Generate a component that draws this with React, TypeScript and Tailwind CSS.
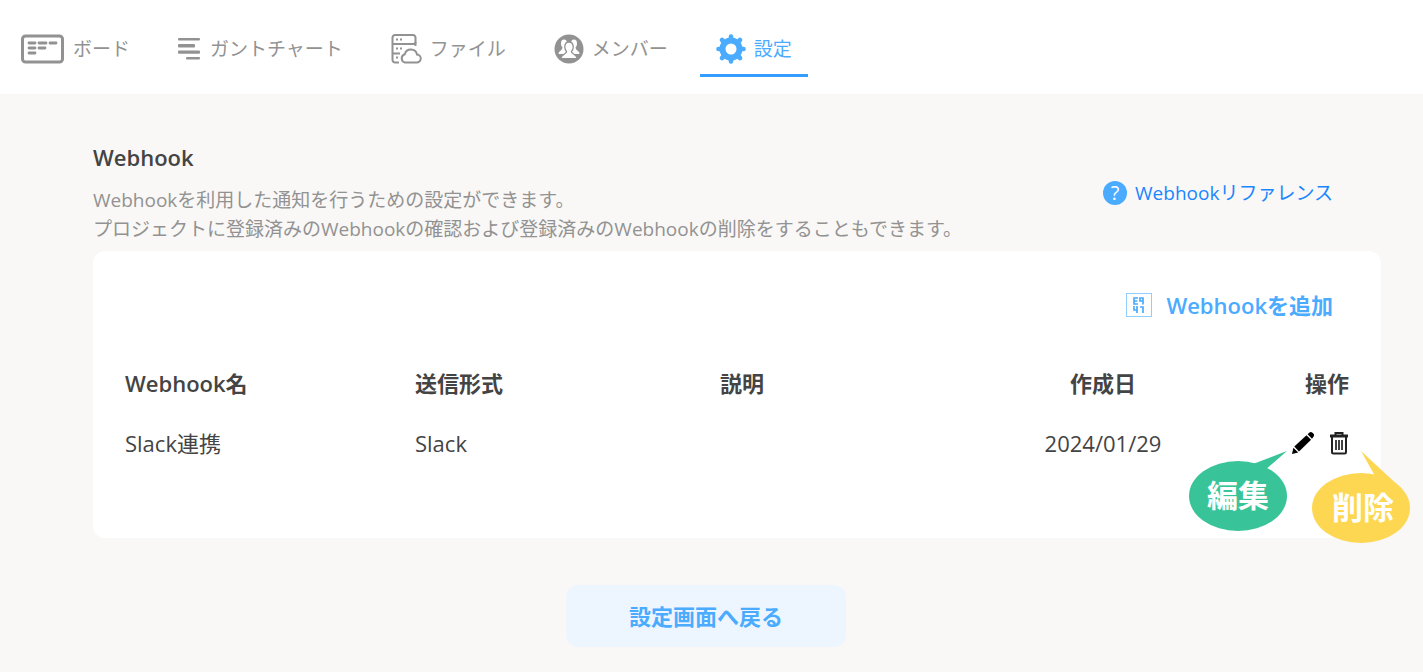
const navItems = [
  { label: "ボード", href: "#board", icon: <BoardIcon /> },
  { label: "ガントチャート", href: "#gantt", icon: <GanttIcon /> },
  { label: "ファイル", href: "#files", icon: <FileIcon /> },
  { label: "メンバー", href: "#members", icon: <MembersIcon /> },
]

const webhooks = [
  { id: 1, name: "Slack連携", format: "Slack", description: "", createdAt: "2024/01/29" },
]

function BoardIcon() {
  return (
    <svg width="45" height="30" viewBox="0 0 45 30" fill="none" stroke="#929292" aria-hidden="true">
      <rect x="2.5" y="2" width="40" height="26" rx="3" strokeWidth="3" />
      <path
        d="M9 9h6M19 9h7M30 9h6M9 14h6M19 14h6M9 19h6"
        strokeWidth="2.8"
        strokeLinecap="round"
      />
    </svg>
  )
}

function GanttIcon() {
  return (
    <svg width="24" height="24" viewBox="0 0 24 24" fill="#929292" aria-hidden="true">
      <rect x="0" y="1" width="22" height="2.6" rx="1" />
      <rect x="0" y="7" width="17" height="3.4" rx="1" />
      <rect x="0" y="13.4" width="22" height="3.4" rx="1" />
      <rect x="8" y="20" width="14" height="2.6" rx="1" />
    </svg>
  )
}

function FileIcon() {
  return (
    <svg width="31" height="30" viewBox="0 0 31 30" fill="none" stroke="#929292" strokeWidth="2" aria-hidden="true">
      <path d="M8 28.500H4a2.500 2.500 0 0 1-2.500-2.500V3.500A2.500 2.500 0 0 1 4 1h18a2.500 2.500 0 0 1 2.500 2.500V8a2 2 0 0 1-2 2H1.500" />
      <path d="M24.500 8v4M1.500 19.500H9" />
      <path d="M5 5.500h2M9 5.500h2M5 14.500h2M9 14.500h2M5 23.500h2" />
      <path d="M14 28.500h11.500a4 4 0 0 0 .5-8 6.300 6.300 0 0 0-12.200-.3A4.300 4.300 0 0 0 14 28.500z" />
    </svg>
  )
}

function MembersIcon() {
  return (
    <svg width="30" height="30" viewBox="0 0 30 30" aria-hidden="true">
      <circle cx="15" cy="15" r="14.500" fill="#929292" />
      <g fill="#fff">
        <ellipse cx="10" cy="9.500" rx="3" ry="4" />
        <ellipse cx="20" cy="9.500" rx="3" ry="4" />
        <path d="M4.500 20c0-3.500 4-3 4-7h4v7zM25.500 20c0-3.500-4-3-4-7h-4v7z" />
      </g>
      <path
        d="M15 8c-2.700 0-4.200 2-4.200 5 0 2 .8 3.600 1.800 4.600 0 2.700-5.400 2.200-5.800 7h16.400c-.4-4.800-5.800-4.300-5.800-7 1-1 1.800-2.600 1.800-4.600 0-3-1.500-5-4.200-5z"
        fill="#fff"
        stroke="#929292"
        strokeWidth="1.300"
      />
    </svg>
  )
}

function GearIcon() {
  return (
    <svg width="30" height="30" viewBox="0 0 30 30" fill="none" stroke="#4aabff" aria-hidden="true">
      <circle cx="15" cy="15" r="8.500" strokeWidth="6" />
      <path
        d="M15 2.500v3M15 24.500v3M2.500 15h3M24.500 15h3M6 6l2 2M22 22l2 2M24 6l-2 2M8 22l-2 2"
        strokeWidth="4.600"
        strokeLinecap="round"
      />
    </svg>
  )
}

function MissingGlyphIcon() {
  return (
    <svg width="26" height="24" viewBox="0 0 26 24" fill="none" stroke="#4aabff" aria-hidden="true">
      <rect x="0.500" y="0.500" width="25" height="23" strokeOpacity="0.600" />
      <path
        d="M12 5H8v6h4M8 8h3.500M17 11.500V5h-3v3h3M8 13v4h3.500M11 13v7M14 14h3v6"
        strokeWidth="1.700"
      />
    </svg>
  )
}

function PencilIcon() {
  return (
    <svg width="22" height="22" viewBox="0 0 22 22" fill="#000" aria-hidden="true">
      <path d="M0 22l1.400-6.200 4.800 4.800z" />
      <path d="M2.300 14.500L14.500 3.200l4.600 4.600L7 19.500z" />
      <path d="M15.600 2.200L17.200.8a2.400 2.400 0 0 1 3.300 0l.8.8a2.400 2.400 0 0 1 0 3.300l-1.300 1.800z" />
    </svg>
  )
}

function TrashIcon() {
  return (
    <svg width="20" height="24" viewBox="0 0 20 24" fill="none" stroke="#222" strokeWidth="2" aria-hidden="true">
      <path d="M1 5h18" strokeWidth="3" />
      <path d="M6.500 4.500V2h7v2.500M3 5.500v15.500a1.500 1.500 0 0 0 1.500 1.500h11a1.500 1.500 0 0 0 1.500-1.500V5.500" />
      <path d="M7 9v10M10 9v10M13 9v10" strokeWidth="1.700" />
    </svg>
  )
}

function EditBalloon() {
  return (
    <div className="absolute top-[19px] right-[27px] h-20 w-[98px]">
      <svg className="absolute inset-0" width="98" height="80" viewBox="0 0 98 80" fill="#38c498" aria-hidden="true">
        <ellipse cx="49" cy="45" rx="49" ry="35" />
        <path d="M98 0L64 13l12 6z" />
      </svg>
      <span className="absolute inset-x-0 top-[26px] text-center text-[31px] leading-9 font-bold text-white">編集</span>
    </div>
  )
}

function DeleteBalloon() {
  return (
    <div className="absolute top-5 -right-[61px] h-[92px] w-[98px]">
      <svg className="absolute inset-0" width="98" height="92" viewBox="0 0 98 92" fill="#fdd751" aria-hidden="true">
        <ellipse cx="49" cy="57" rx="49" ry="35" />
        <path d="M49 0l14 25 16 22 11-9z" />
      </svg>
      <span className="absolute inset-x-0 top-[38px] pl-1 text-center text-[31px] leading-9 font-bold text-white">削除</span>
    </div>
  )
}

export default function App() {
  return (
    <div className="min-h-screen bg-[#f9f8f6] font-['Open_Sans','Noto_Sans_CJK_JP',sans-serif] text-[#444]">
      <header className="bg-white pb-[17px]">
        <nav className="flex items-stretch pl-5 text-[19px] leading-7 whitespace-nowrap text-[#929292]">
          <div className="flex gap-12">
            {navItems.map((item) => (
              <a
                key={item.label}
                href={item.href}
                className="flex items-center gap-2 border-b-3 border-transparent pt-6"
              >
                {item.icon}
                <span>{item.label}</span>
              </a>
            ))}
          </div>
          <a
            href="#settings"
            aria-current="page"
            className="ml-8 flex h-[77px] items-center gap-2 border-b-3 border-[#349dfd] px-4 pt-6"
          >
            <GearIcon />
            <span className="text-[#4aabff]">設定</span>
          </a>
        </nav>
      </header>

      <main className="pt-12 pr-[42px] pb-6 pl-[93px]">
        <div className="flex items-center justify-between pr-12">
          <div>
            <h1 className="text-[22px] leading-[30px] font-semibold">Webhook</h1>
            <p className="mt-[14px] text-[19px] leading-[29px] text-[#929292]">
              Webhookを利用した通知を行うための設定ができます。
              <br />
              プロジェクトに登録済みのWebhookの確認および登録済みのWebhookの削除をすることもできます。
            </p>
          </div>
          <a href="#reference" className="flex items-center gap-2 text-[19px] leading-7 whitespace-nowrap text-[#1a86ff]">
            <span className="flex size-6 items-center justify-center rounded-full bg-[#4aabff] text-xl text-white">?</span>
            Webhookリファレンス
          </a>
        </div>

        <section className="mt-[7px] rounded-xl bg-white px-8 pt-9 pb-[65px]">
          <div className="flex justify-end pr-4">
            <button type="button" className="flex items-center gap-[14px] text-[22px] leading-9 font-semibold text-[#4aabff]">
              <MissingGlyphIcon />
              Webhookを追加
            </button>
          </div>

          <table className="mt-[30px] w-full table-fixed text-[22px] leading-[60px]">
            <thead>
              <tr>
                <th className="w-[290px] text-left font-semibold">Webhook名</th>
                <th className="w-[305px] text-left font-semibold">送信形式</th>
                <th className="text-left font-semibold">説明</th>
                <th className="w-[180px] font-semibold">作成日</th>
                <th className="w-[156px] text-right font-semibold">操作</th>
              </tr>
            </thead>
            <tbody>
              {webhooks.map((webhook) => (
                <tr key={webhook.id}>
                  <td>{webhook.name}</td>
                  <td>{webhook.format}</td>
                  <td>{webhook.description}</td>
                  <td className="text-center">{webhook.createdAt}</td>
                  <td>
                    <div className="flex items-center justify-end gap-[15px]">
                      <div className="relative">
                        <button type="button" aria-label="編集" className="block">
                          <PencilIcon />
                        </button>
                        <EditBalloon />
                      </div>
                      <div className="relative">
                        <button type="button" aria-label="削除" className="block">
                          <TrashIcon />
                        </button>
                        <DeleteBalloon />
                      </div>
                    </div>
                  </td>
                </tr>
              ))}
            </tbody>
          </table>
        </section>

        <div className="mt-[47px] flex justify-center pr-[62px]">
          <button
            type="button"
            className="h-[62px] w-[280px] rounded-xl bg-[#edf6ff] text-[22px] leading-8 font-semibold text-[#4aabff]"
          >
            設定画面へ戻る
          </button>
        </div>
      </main>
    </div>
  )
}
